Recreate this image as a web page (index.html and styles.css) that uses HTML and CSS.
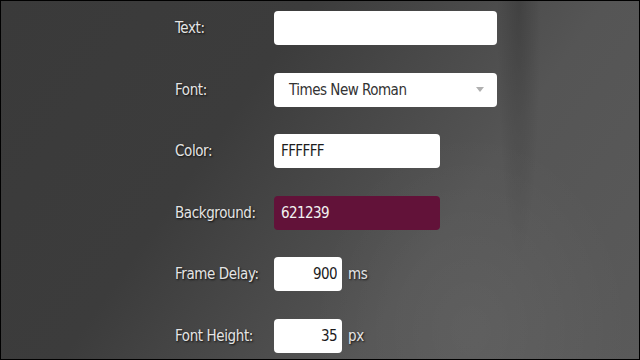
FILE: index.html
```html
<!DOCTYPE html>
<html lang="en">
<head>
    <meta charset="UTF-8">
    <meta name="viewport" content="width=device-width, initial-scale=1.0">
    <title>Text GIF Maker</title>
    <link rel="stylesheet" href="styles.css">
</head>
<body>
    <div class="page">
        <form class="settings">
            <div class="row">
                <label class="label" for="text">Text:</label>
                <input class="field wide" type="text" id="text">
            </div>
            <div class="row">
                <label class="label" for="font">Font:</label>
                <div class="select wide">
                    <span class="select-value">Times New Roman</span>
                    <span class="select-arrow"></span>
                </div>
            </div>
            <div class="row">
                <label class="label" for="color">Color:</label>
                <input class="field medium" type="text" id="color" value="FFFFFF">
            </div>
            <div class="row">
                <label class="label" for="background">Background:</label>
                <input class="field medium bg-field" type="text" id="background" value="621239">
            </div>
            <div class="row">
                <label class="label" for="delay">Frame Delay:</label>
                <input class="field small number" type="text" id="delay" value="900">
                <span class="unit">ms</span>
            </div>
            <div class="row">
                <label class="label" for="height">Font Height:</label>
                <input class="field small number" type="text" id="height" value="35">
                <span class="unit">px</span>
            </div>
        </form>
    </div>
</body>
</html>
```

FILE: styles.css
```css
html, body {
    margin: 0;
    padding: 0;
}
body {
    font-family: 'DejaVu Sans Condensed', 'DejaVu Sans', sans-serif;
}
.page {
    box-sizing: border-box;
    width: 640px;
    height: 360px;
    border: 1px solid #000;
    overflow: hidden;
    background:
        radial-gradient(ellipse 22px 260px at 518px 0, rgba(0,0,0,0.16), rgba(0,0,0,0)),
        radial-gradient(ellipse 160px 200px at 470px 330px, rgba(255,255,255,0.05), rgba(255,255,255,0)),
        linear-gradient(125deg, #3a3a3a 0%, #3c3c3c 35%, #555 68%, #5a5a5a 100%);
}
.settings {
    padding: 10px 0 0 174px;
}
.row {
    display: flex;
    align-items: center;
    height: 34px;
    margin-bottom: 27.6px;
}
.label {
    width: 99px;
    flex-shrink: 0;
    color: #e4e4e4;
    font-size: 15px;
    letter-spacing: -0.4px;
    text-shadow: 1px 1px 2px rgba(0, 0, 0, 0.8);
}
.field {
    box-sizing: border-box;
    height: 34px;
    border: none;
    border-radius: 4px;
    background-color: #fff;
    padding: 0 7px;
    font-family: inherit;
    font-size: 15px;
    letter-spacing: -0.6px;
    color: #1c1c1c;
    outline: none;
}
.wide {
    width: 223px;
}
.medium {
    width: 166px;
}
.small {
    width: 68px;
}
.bg-field {
    background-color: #621239;
    color: #f2f2f2;
}
.number {
    text-align: right;
    padding-right: 5px;
}
.unit {
    margin-left: 6px;
    color: #e4e4e4;
    font-size: 15px;
    letter-spacing: -0.4px;
    text-shadow: 1px 1px 2px rgba(0, 0, 0, 0.8);
}
.select {
    box-sizing: border-box;
    height: 34px;
    border-radius: 4px;
    background-color: #fff;
    display: flex;
    align-items: center;
    justify-content: space-between;
    padding: 0 13px 0 15px;
    font-size: 15px;
    letter-spacing: -0.5px;
    color: #333;
}
.select-arrow {
    width: 0;
    height: 0;
    border-left: 4px solid transparent;
    border-right: 4px solid transparent;
    border-top: 5px solid #b0b0b0;
}
```
